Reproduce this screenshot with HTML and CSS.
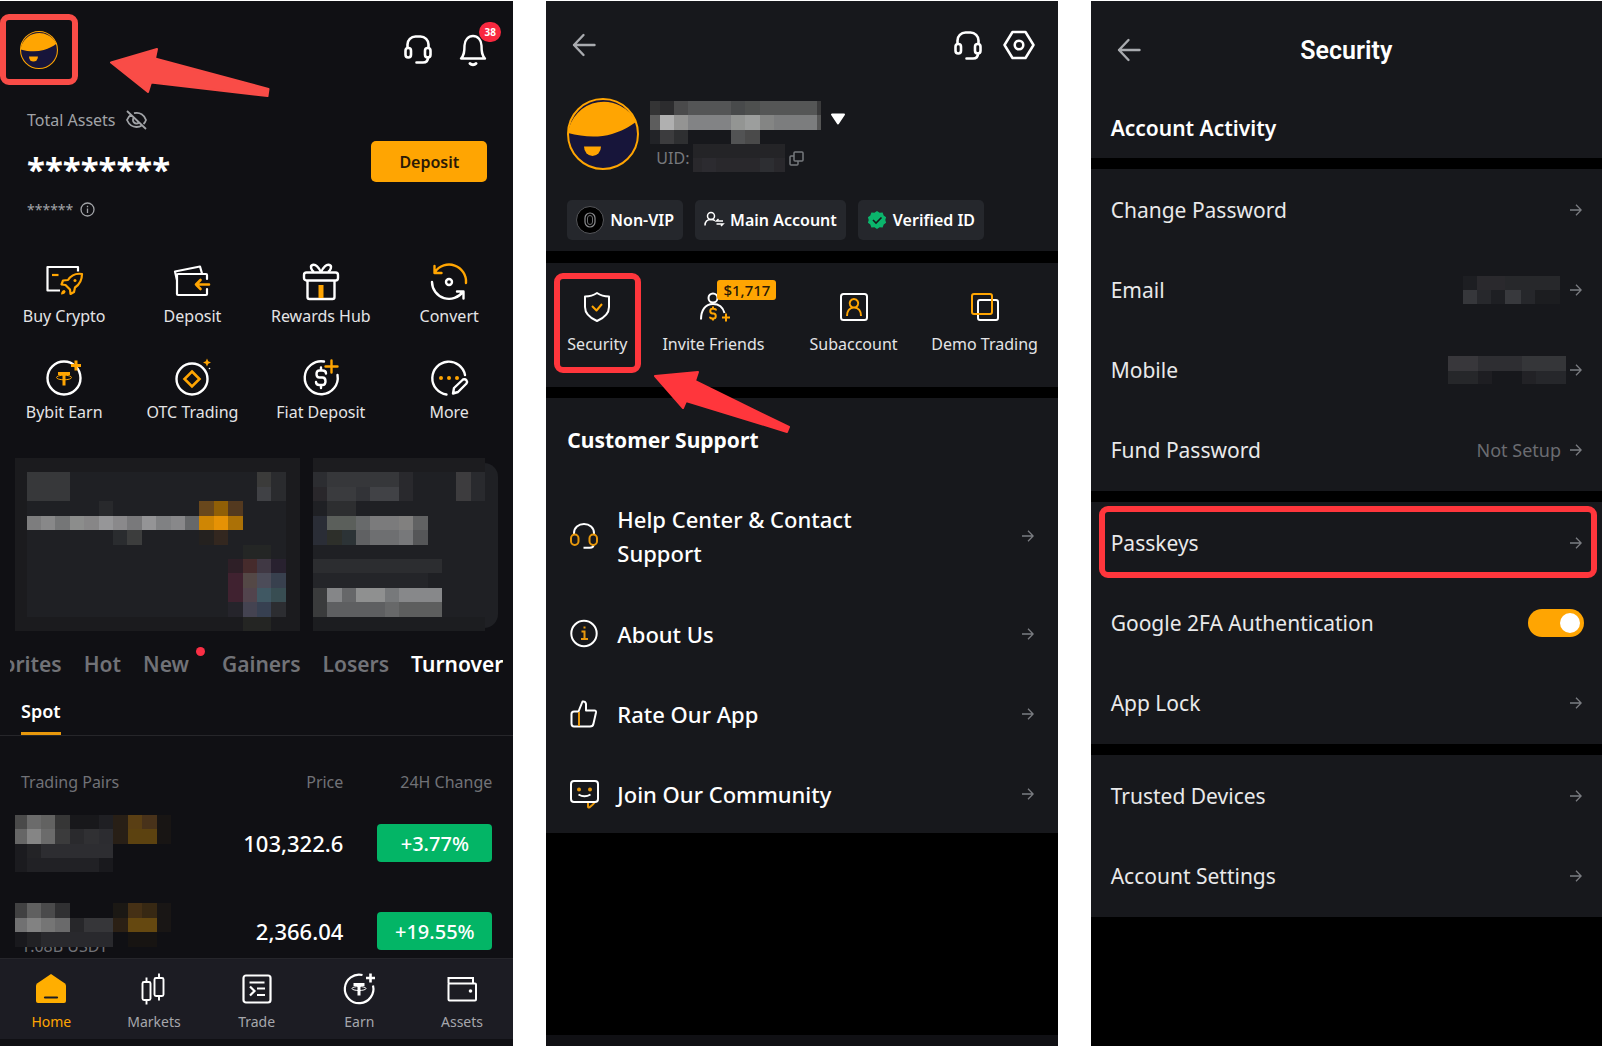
FILE: index.html
```html
<!DOCTYPE html>
<html lang="en">
<head>
    <meta charset="UTF-8">
    <meta name="viewport" content="width=device-width, initial-scale=1.0">
    <title>Set up a passkey</title>
    <link rel="stylesheet" href="styles.css">
</head>
<body>
    <!-- Shared icons -->
    <svg class="sprite" aria-hidden="true">
        <symbol id="avatar" viewBox="0 0 72 72">
            <circle cx="36" cy="36" r="35" fill="#17153a" stroke="#ffa502" stroke-width="2"/>
            <path d="M1 35C16 39 31 40 45 36C55 33 62 29 69 24A36 36 0 0 0 1 35z" fill="#ffa502"/>
            <path d="M17 48.500h17a8.500 9.500 0 0 1-17 0z" fill="#ffa502"/>
        </symbol>
        <symbol id="headset" viewBox="0 0 28 29">
            <g fill="none" stroke="#fff" stroke-width="2.600" stroke-linecap="round">
                <path d="M3.500 12.500V9.500a8 8 0 0 1 8-8h5a8 8 0 0 1 8 8V12.500"/>
                <rect x="1.500" y="13" width="5.500" height="9.500" rx="2.700"/>
                <rect x="21" y="13" width="5.500" height="9.500" rx="2.700"/>
                <path d="M24 22.500c0 3.500-2 5-5 5h-6.500"/>
            </g>
        </symbol>
        <symbol id="back" viewBox="0 0 24 24">
            <path d="M11.500 2L2 12l9.500 10M2 12h20.500" fill="none" stroke="#a9abaf" stroke-width="2.400" stroke-linecap="round" stroke-linejoin="round"/>
        </symbol>
        <symbol id="go" viewBox="0 0 12 12">
            <path d="M0 6h11M6 .8L11.200 6L6 11.200" fill="none" stroke="#7b7d82" stroke-width="1.300"/>
        </symbol>
    </svg>

    <div class="screens">
        <!-- Home screen -->
        <section class="screen home">
            <header class="home-header">
                <a href="#profile" class="profile-link" aria-label="Profile"><svg class="avatar-small"><use href="#avatar"/></svg></a>
                <div class="header-icons">
                    <a href="#support" aria-label="Support"><svg class="headset"><use href="#headset"/></svg></a>
                    <a href="#notifications" class="bell" aria-label="Notifications">
                        <svg width="28" height="32" viewBox="0 0 28 32" fill="none" stroke="#fff" stroke-width="2.400" stroke-linecap="round" stroke-linejoin="round">
                            <path d="M2 24.500h24c-3-3-3.500-6-3.500-13a8.500 9.500 0 0 0-17 0c0 7-.5 10-3.500 13z"/>
                            <path d="M11 29.500c1.500 1.500 4.500 1.500 6 0" stroke-width="3"/>
                        </svg>
                        <span class="count">38</span>
                    </a>
                </div>
            </header>
            <svg class="pointer pointer-home" width="162" height="52" viewBox="0 0 162 52" fill="#f94c47" stroke="#f94c47" stroke-width="2" stroke-linejoin="round">
                <path d="M2 15.500L48 2L46 11.500L159.500 42L158.500 49L42 35.500L39 45z"/>
            </svg>

            <div class="assets">
                <div class="assets-label">
                    <span>Total Assets</span>
                    <svg width="21" height="20" viewBox="0 0 21 20" fill="none" stroke="#a1a3a7" stroke-width="1.800">
                        <path d="M1 1l19 18M5.500 4.500C3 6 1.500 8 1 10c2 4.500 5.500 7 9.500 7 2 0 4-.6 5.500-1.500M8 3.200c6-1.500 10.500 2 12 6.800-.5 1.500-1.500 3-2.500 4"/>
                        <path d="M8 7.500a3.500 3.500 0 0 0 5 5"/>
                    </svg>
                </div>
                <div class="assets-main">
                    <span class="balance">********</span>
                    <button type="button" class="deposit">Deposit</button>
                </div>
                <div class="assets-sub">
                    <span>******</span>
                    <svg width="15" height="15" viewBox="0 0 15 15" fill="none" stroke="#a1a3a7" stroke-width="1.300">
                        <circle cx="7.500" cy="7.500" r="6.500"/>
                        <path d="M7.500 6.500v4.500M7.500 3.800v1.400"/>
                    </svg>
                </div>
            </div>

            <nav class="shortcuts">
                <a href="#buy">
                    <svg width="38" height="36" viewBox="0 0 38 36" fill="none" stroke-width="2.200" stroke-linejoin="round">
                        <path d="M33 8.500V4H2.500v23.500H15" stroke="#fff"/>
                        <path d="M7 12h6.500" stroke="#ffa502"/>
                        <path d="M37 11c-6-1-11 1.500-14 6l-5 .5-1.500 4 4 .5 4.500 4.500.5 4.500 3.500-2 1-4.500c4.500-3 7-7.500 7-13.500z" stroke="#ffa502"/>
                        <circle cx="30" cy="17.500" r="1.500" fill="#ffa502"/>
                        <path d="M19.500 27c-2 0-3.500 2-3.500 4.500 2.500 0 4.500-1 4.500-3z" fill="#ffa502"/>
                    </svg>
                    <span>Buy Crypto</span>
                </a>
                <a href="#deposit">
                    <svg width="38" height="36" viewBox="0 0 38 36" fill="none" stroke-width="2.200" stroke-linejoin="round" stroke-linecap="round">
                        <path d="M34 16V12q0-1-1-1H5q-1 0-1 1v19q0 1 1 1h28q1 0 1-1v-5" stroke="#fff"/>
                        <path d="M4 17L2 8.500L27 3.500l2 7" stroke="#fff"/>
                        <path d="M36 21.500H23M27.500 17l-4.500 4.500 4.500 4.500" stroke="#ffa502" stroke-width="2.600"/>
                    </svg>
                    <span>Deposit</span>
                </a>
                <a href="#rewards">
                    <svg width="38" height="38" viewBox="0 0 38 38" fill="none" stroke="#fff" stroke-width="2.400" stroke-linejoin="round">
                        <rect x="2" y="9.500" width="34" height="8" rx="2.500"/>
                        <path d="M5.500 17.500V34q0 2 2 2h23q2 0 2-2V17.500"/>
                        <path d="M19 9.500C17 4 13.500 1 10.500 2S9.500 7.500 12 9M19 9.500C21 4 24.500 1 27.500 2S28.500 7.500 26 9"/>
                        <path d="M19 22v13" stroke="#ffa502" stroke-width="5"/>
                    </svg>
                    <span>Rewards Hub</span>
                </a>
                <a href="#convert">
                    <svg width="38" height="38" viewBox="0 0 38 38" fill="none" stroke-width="2.400" stroke-linecap="round" stroke-linejoin="round">
                        <path d="M36 20A17 17 0 0 0 5 9M4.500 3v7h7" stroke="#ffa502"/>
                        <path d="M2 19a17 17 0 0 0 31 9.500M27 28.500h6.500v7" stroke="#fff"/>
                        <circle cx="19" cy="19" r="3" stroke="#fff"/>
                    </svg>
                    <span>Convert</span>
                </a>
                <a href="#earn">
                    <svg width="38" height="38" viewBox="0 0 38 38" fill="none">
                        <circle cx="19" cy="19" r="16.500" stroke="#fff" stroke-width="2.400"/>
                        <path d="M13 14.500h12M19 14.500v12M31 1.500v10M26 6.500h10" stroke="#ffa502" stroke-width="3"/>
                        <ellipse cx="19" cy="18.500" rx="7.500" ry="2.300" stroke="#ffa502"/>
                    </svg>
                    <span>Bybit Earn</span>
                </a>
                <a href="#otc">
                    <svg width="38" height="38" viewBox="0 0 38 38" fill="none">
                        <circle cx="19" cy="20" r="15.500" stroke="#fff" stroke-width="2.400"/>
                        <path d="M19 12.500l7.500 7.500-7.500 7.500-7.500-7.500z" stroke="#ffa502" stroke-width="2.600"/>
                        <path d="M34-.5l1.200 2.800L38 3.500l-2.800 1.200L34 7.500l-1.200-2.800L30 3.500l2.800-1.200z" fill="#ffa502"/>
                        <circle cx="36.500" cy="9.500" r=".8" fill="#fff"/>
                    </svg>
                    <span>OTC Trading</span>
                </a>
                <a href="#fiat">
                    <svg width="38" height="38" viewBox="0 0 38 38" fill="none" stroke="#fff" stroke-width="2.400" stroke-linecap="round">
                        <path d="M22 2.500A16.500 16.500 0 1 0 35.500 16"/>
                        <path d="M24 14.500c0-2-1.500-3-3.500-3h-3c-4 0-4 7 0 7h3c4 0 4 7.500 0 7.500h-3c-2 0-3.500-1-3.500-3M19 8.500v3M19 26v3"/>
                        <path d="M29.500 1.500v12M23.500 7.500h12" stroke="#ffa502"/>
                    </svg>
                    <span>Fiat Deposit</span>
                </a>
                <a href="#more">
                    <svg width="38" height="38" viewBox="0 0 38 38" fill="none" stroke="#fff" stroke-width="2.400" stroke-linecap="round" stroke-linejoin="round">
                        <path d="M16.500 35.500A16.500 16.500 0 1 1 35 16"/>
                        <path d="M23 34.500l1-5.500 9-8.500c3-1 5 1.500 3.500 4l-8.500 8.500z"/>
                        <g fill="#ffa502" stroke="none"><circle cx="11" cy="19" r="2"/><circle cx="19" cy="19" r="2"/><circle cx="27" cy="19" r="2"/></g>
                    </svg>
                    <span>More</span>
                </a>
            </nav>

            <div class="promos">
                <svg class="mosaic promo promo-wide" viewBox="0.2 0 19.800 12" preserveAspectRatio="none" shape-rendering="crispEdges">
                    <rect width="20" height="12" fill="#1b1b1e"/>
                    <rect x="1" y="1" width="18" height="10" fill="#1f2024"/>
                    <rect x="1" y="1" width="3" height="2" fill="#37383a"/>
                    <rect x="17" y="1" width="1" height="1" fill="#3b3b3a"/>
                    <rect x="17" y="2" width="1" height="1" fill="#404145"/>
                    <rect x="18" y="1" width="1" height="2" fill="#2a2b2e"/>
                    <rect x="6" y="3" width="1" height="1" fill="#28292c"/>
                    <rect x="13" y="3" width="1" height="1" fill="#68471c"/>
                    <rect x="14" y="3" width="1" height="1" fill="#905f06"/>
                    <rect x="15" y="3" width="1" height="1" fill="#53391f"/>
                    <rect x="1" y="4" width="1" height="1" fill="#7d7d7e"/>
                    <rect x="2" y="4" width="1" height="1" fill="#888889"/>
                    <rect x="3" y="4" width="1" height="1" fill="#757677"/>
                    <rect x="4" y="4" width="1" height="1" fill="#8c8d8c"/>
                    <rect x="5" y="4" width="1" height="1" fill="#878687"/>
                    <rect x="6" y="4" width="1" height="1" fill="#969698"/>
                    <rect x="7" y="4" width="1" height="1" fill="#8a898b"/>
                    <rect x="8" y="4" width="1" height="1" fill="#79797b"/>
                    <rect x="9" y="4" width="1" height="1" fill="#949496"/>
                    <rect x="10" y="4" width="1" height="1" fill="#808183"/>
                    <rect x="11" y="4" width="1" height="1" fill="#88888a"/>
                    <rect x="12" y="4" width="1" height="1" fill="#66686a"/>
                    <rect x="13" y="4" width="1" height="1" fill="#cf8604"/>
                    <rect x="14" y="4" width="1" height="1" fill="#e69205"/>
                    <rect x="15" y="4" width="1" height="1" fill="#ac7106"/>
                    <rect x="7" y="5" width="1" height="1" fill="#2a2c2f"/>
                    <rect x="8" y="5" width="1" height="1" fill="#3c3d3d"/>
                    <rect x="13" y="5" width="1" height="1" fill="#24211f"/>
                    <rect x="14" y="5" width="1" height="1" fill="#33271f"/>
                    <rect x="16" y="6" width="2" height="1" fill="#242625"/>
                    <rect x="15" y="7" width="1" height="1" fill="#2e1f27"/>
                    <rect x="16" y="7" width="1" height="1" fill="#462b2c"/>
                    <rect x="17" y="7" width="1" height="1" fill="#403844"/>
                    <rect x="18" y="7" width="1" height="1" fill="#28212f"/>
                    <rect x="15" y="8" width="1" height="2" fill="#402230"/>
                    <rect x="16" y="8" width="1" height="1" fill="#544846"/>
                    <rect x="17" y="8" width="1" height="1" fill="#4c4c59"/>
                    <rect x="18" y="8" width="1" height="1" fill="#38404e"/>
                    <rect x="16" y="9" width="1" height="1" fill="#52444d"/>
                    <rect x="17" y="9" width="1" height="1" fill="#405863"/>
                    <rect x="18" y="9" width="1" height="1" fill="#384d52"/>
                    <rect x="15" y="10" width="1" height="1" fill="#25242b"/>
                    <rect x="16" y="10" width="1" height="1" fill="#444351"/>
                    <rect x="17" y="10" width="1" height="1" fill="#374051"/>
                    <rect x="18" y="10" width="1" height="1" fill="#2c2d31"/>
                    <rect x="16" y="11" width="2" height="1" fill="#242523"/>
                </svg>
                <div class="promo promo-narrow">
                    <svg class="mosaic" viewBox="0 0 12 12" preserveAspectRatio="none" shape-rendering="crispEdges">
                        <rect width="12" height="12" fill="#1f2024"/>
                        <rect width="12" height="1" fill="#1c1c1f"/>
                        <rect y="11" width="12" height="1" fill="#1c1d20"/>
                        <rect y="1" width="1" height="1" fill="#2c2d31"/>
                        <rect y="2" width="1" height="1" fill="#29272b"/>
                        <rect x="1" y="1" width="5" height="1" fill="#36373a"/>
                        <rect x="1" y="2" width="2" height="1" fill="#3a3b3e"/>
                        <rect x="3" y="2" width="1" height="1" fill="#323337"/>
                        <rect x="4" y="2" width="2" height="1" fill="#414246"/>
                        <rect x="6" y="1" width="1" height="2" fill="#29292d"/>
                        <rect x="10" y="1" width="1" height="2" fill="#3d3c3e"/>
                        <rect x="11" y="1" width="1" height="2" fill="#292a2e"/>
                        <rect x="1" y="3" width="2" height="1" fill="#2d2e30"/>
                        <rect y="4" width="1" height="2" fill="#2a2d36"/>
                        <rect x="1" y="4" width="2" height="1" fill="#5b5f5b"/>
                        <rect x="3" y="4" width="1" height="1" fill="#686a6b"/>
                        <rect x="4" y="4" width="2" height="1" fill="#7b7b7c"/>
                        <rect x="6" y="4" width="1" height="1" fill="#81807f"/>
                        <rect x="7" y="4" width="1" height="1" fill="#616263"/>
                        <rect x="1" y="5" width="1" height="1" fill="#2d2f2a"/>
                        <rect x="2" y="5" width="1" height="1" fill="#2c3336"/>
                        <rect x="3" y="5" width="1" height="1" fill="#606163"/>
                        <rect x="4" y="5" width="2" height="1" fill="#6e6f71"/>
                        <rect x="6" y="5" width="1" height="1" fill="#77787a"/>
                        <rect x="7" y="5" width="1" height="1" fill="#555658"/>
                        <rect y="7" width="9" height="1" fill="#2c2d30"/>
                        <rect y="8" width="8" height="1" fill="#242529"/>
                        <rect y="9" width="1" height="2" fill="#3a3b3c"/>
                        <rect x="1" y="9" width="1" height="1" fill="#858688"/>
                        <rect x="2" y="9" width="1" height="1" fill="#666769"/>
                        <rect x="3" y="9" width="2" height="1" fill="#8f9090"/>
                        <rect x="5" y="9" width="1" height="1" fill="#77797b"/>
                        <rect x="6" y="9" width="3" height="1" fill="#87888a"/>
                        <rect x="1" y="10" width="4" height="1" fill="#5e5f61"/>
                        <rect x="5" y="10" width="1" height="1" fill="#676869"/>
                        <rect x="6" y="10" width="3" height="1" fill="#5d5e5e"/>
                    </svg>
                </div>
            </div>

            <nav class="tabs">
                <a href="#favorites">Favorites</a>
                <a href="#hot">Hot</a>
                <a href="#new" class="has-dot">New</a>
                <a href="#gainers">Gainers</a>
                <a href="#losers">Losers</a>
                <a href="#turnover" class="active">Turnover</a>
            </nav>
            <div class="subtabs">
                <a href="#spot">Spot</a>
            </div>

            <div class="market">
                <table>
                    <thead>
                        <tr><th>Trading Pairs</th><th>Price</th><th>24H Change</th></tr>
                    </thead>
                    <tbody>
                        <tr>
                            <td class="pair">
                                <svg class="mosaic pair-cover" width="156" height="57" viewBox="0.2 0 10.800 4" preserveAspectRatio="none" shape-rendering="crispEdges">
                                    <rect width="1" height="1" fill="#4a4a4a"/>
                                    <rect x="1" width="1" height="1" fill="#6b6b6b"/>
                                    <rect x="2" width="1" height="1" fill="#626261"/>
                                    <rect x="3" width="1" height="1" fill="#363636"/>
                                    <rect x="4" width="2" height="1" fill="#18181b"/>
                                    <rect x="6" width="1" height="1" fill="#1f1f23"/>
                                    <rect x="7" width="1" height="2" fill="#281f16"/>
                                    <rect x="8" width="1" height="1" fill="#5a3f14"/>
                                    <rect x="9" width="1" height="1" fill="#48321a"/>
                                    <rect x="10" width="1" height="2" fill="#181514"/>
                                    <rect y="1" width="1" height="1" fill="#666"/>
                                    <rect x="1" y="1" width="1" height="1" fill="#858585"/>
                                    <rect x="2" y="1" width="1" height="1" fill="#6b6b6b"/>
                                    <rect x="3" y="1" width="1" height="1" fill="#3b3b3c"/>
                                    <rect x="4" y="1" width="1" height="1" fill="#2a2a2d"/>
                                    <rect x="5" y="1" width="1" height="1" fill="#303033"/>
                                    <rect x="6" y="1" width="1" height="1" fill="#2c2c30"/>
                                    <rect x="8" y="1" width="2" height="1" fill="#5c4210"/>
                                    <rect y="2" width="1" height="2" fill="#1b1b1f"/>
                                    <rect x="1" y="2" width="1" height="1" fill="#232326"/>
                                    <rect x="2" y="2" width="5" height="1" fill="#2d2d31"/>
                                    <rect x="1" y="3" width="5" height="1" fill="#212125"/>
                                    <rect x="6" y="3" width="1" height="1" fill="#19191d"/>
                                </svg>
                            </td>
                            <td class="price">103,322.6</td>
                            <td><button type="button" class="change">+3.77%</button></td>
                        </tr>
                        <tr>
                            <td class="pair">
                                <span class="volume">1.08B USDT</span>
                                <svg class="mosaic pair-cover" width="156" height="44" viewBox="0.2 0 10.800 3" preserveAspectRatio="none" shape-rendering="crispEdges">
                                    <rect width="11" height="3" fill="#101014"/>
                                    <rect width="1" height="1" fill="#414142"/>
                                    <rect x="1" width="1" height="1" fill="#606060"/>
                                    <rect x="2" width="1" height="1" fill="#4a4a4b"/>
                                    <rect x="3" width="1" height="1" fill="#303032"/>
                                    <rect x="7" width="1" height="1" fill="#1b1814"/>
                                    <rect x="8" width="1" height="1" fill="#453015"/>
                                    <rect x="9" width="1" height="1" fill="#372813"/>
                                    <rect x="10" width="1" height="2" fill="#191615"/>
                                    <rect y="1" width="1" height="1" fill="#717172"/>
                                    <rect x="1" y="1" width="1" height="1" fill="#828282"/>
                                    <rect x="2" y="1" width="1" height="1" fill="#757575"/>
                                    <rect x="3" y="1" width="1" height="1" fill="#6a6a6b"/>
                                    <rect x="4" y="1" width="1" height="1" fill="#27272a"/>
                                    <rect x="5" y="1" width="2" height="1" fill="#363639"/>
                                    <rect x="7" y="1" width="1" height="1" fill="#2b2015"/>
                                    <rect x="8" y="1" width="2" height="1" fill="#654810"/>
                                    <rect y="2" width="1" height="1" fill="#19191d"/>
                                    <rect x="1" y="2" width="1" height="1" fill="#212124"/>
                                    <rect x="2" y="2" width="5" height="1" fill="#29292d"/>
                                    <rect x="8" y="2" width="2" height="1" fill="#171412"/>
                                </svg>
                            </td>
                            <td class="price">2,366.04</td>
                            <td><button type="button" class="change">+19.55%</button></td>
                        </tr>
                    </tbody>
                </table>
            </div>

            <nav class="bottom-nav">
                <a href="#home" class="active">
                    <svg width="32" height="32" viewBox="0 0 32 32">
                        <path d="M16 1L30 10.500q1 1 1 2.500V28q0 2-2 2H3q-2 0-2-2V13Q1 11.500 2 10.500z" fill="#ffae00"/>
                        <path d="M10 24.500h12" stroke="#1c1c23" stroke-width="2.200" stroke-linecap="round"/>
                    </svg>
                    <span>Home</span>
                </a>
                <a href="#markets">
                    <svg width="32" height="32" viewBox="0 0 32 32" fill="none" stroke="#fff" stroke-width="1.900">
                        <rect x="4.500" y="9" width="8" height="18" rx="1.500"/><rect x="16.500" y="5" width="9" height="18" rx="1.500"/>
                        <path d="M8.500 4.500V9M8.500 27v4.500M21 .5V5M21 23v4.500"/>
                    </svg>
                    <span>Markets</span>
                </a>
                <a href="#trade">
                    <svg width="32" height="32" viewBox="0 0 32 32" fill="none" stroke="#fff" stroke-width="2.200">
                        <rect x="2.500" y="2.500" width="27" height="27" rx="2.500"/>
                        <path d="M8.500 9.500h15M9 13.500l4.500 4.500L9 22.500M16 15.500h8M16 22h8"/>
                    </svg>
                    <span>Trade</span>
                </a>
                <a href="#earn">
                    <svg width="32" height="32" viewBox="0 0 32 32" fill="none" stroke="#fff" stroke-width="2.200">
                        <path d="M19.500 2A14.300 14.300 0 1 0 30 12.500"/>
                        <path d="M27.500.5v9M23 5h9" stroke-width="2.600"/>
                        <path d="M10.500 11.500h11M16 11.500v11" stroke-width="3"/>
                        <ellipse cx="16" cy="15.500" rx="7" ry="2" stroke-width="1"/>
                    </svg>
                    <span>Earn</span>
                </a>
                <a href="#assets">
                    <svg width="32" height="32" viewBox="0 0 32 32" fill="none" stroke="#fff" stroke-width="2">
                        <path d="M2.500 10.500V5h24.500V10.500"/>
                        <rect x="2.500" y="10.500" width="27.500" height="17" rx="1"/>
                        <circle cx="24.500" cy="18" r="1.800" fill="#fff" stroke="none"/>
                    </svg>
                    <span>Assets</span>
                </a>
            </nav>
        </section>

        <!-- Profile screen -->
        <section class="screen profile">
            <div class="panel profile-top">
                <header class="profile-header">
                    <a href="#home" aria-label="Back"><svg class="back"><use href="#back"/></svg></a>
                    <div class="header-icons">
                        <a href="#support" aria-label="Support"><svg class="headset"><use href="#headset"/></svg></a>
                        <a href="#settings" aria-label="Settings">
                            <svg width="32" height="30" viewBox="0 0 32 30" fill="none" stroke="#fff" stroke-width="2.500" stroke-linejoin="round">
                                <path d="M9.500 2h13L30.500 15l-8 13h-13L1.500 15z"/>
                                <circle cx="16" cy="15" r="4.300"/>
                            </svg>
                        </a>
                    </div>
                </header>
                <div class="user">
                    <svg class="avatar-large"><use href="#avatar"/></svg>
                    <div class="user-info">
                        <div class="user-name">
                            <svg class="mosaic" width="171" height="43" viewBox="0.300 0 12 3" preserveAspectRatio="none" shape-rendering="crispEdges">
                                <rect width="1" height="1" fill="#343435"/>
                                <rect x="1" width="1" height="1" fill="#2c2c2e"/>
                                <rect x="2" width="1" height="1" fill="#4a4a4b"/>
                                <rect x="3" width="3" height="1" fill="#545556"/>
                                <rect x="6" width="1" height="1" fill="#484a4b"/>
                                <rect x="7" width="1" height="1" fill="#4e504f"/>
                                <rect x="8" width="4" height="1" fill="#555656"/>
                                <rect x="12" width="1" height="1" fill="#3a3a3b"/>
                                <rect y="1" width="1" height="1" fill="#5d5d5d"/>
                                <rect x="1" y="1" width="1" height="1" fill="#b0b0b0"/>
                                <rect x="2" y="1" width="1" height="1" fill="#949493"/>
                                <rect x="3" y="1" width="3" height="1" fill="#828385"/>
                                <rect x="6" y="1" width="1" height="1" fill="#939593"/>
                                <rect x="7" y="1" width="1" height="1" fill="#9c9e9d"/>
                                <rect x="8" y="1" width="1" height="1" fill="#848584"/>
                                <rect x="9" y="1" width="3" height="1" fill="#7c7d7e"/>
                                <rect x="12" y="1" width="1" height="1" fill="#555"/>
                                <rect y="2" width="1" height="1" fill="#222327"/>
                                <rect x="1" y="2" width="1" height="1" fill="#3c3c3e"/>
                                <rect x="2" y="2" width="1" height="1" fill="#2e2f31"/>
                                <rect x="6" y="2" width="1" height="1" fill="#525354"/>
                                <rect x="7" y="2" width="1" height="1" fill="#4a4a4a"/>
                            </svg>
                            <svg width="16" height="12" viewBox="0 0 16 12"><path d="M2 1.500h12L8 10.500z" fill="#fff" stroke="#fff" stroke-width="2" stroke-linejoin="round"/></svg>
                        </div>
                        <div class="uid">
                            <span>UID:</span>
                            <svg width="92" height="28" viewBox="0 0 92 28" shape-rendering="crispEdges">
                                <rect width="92" height="14" fill="#242427"/>
                                <rect y="14" width="92" height="14" fill="#29282c"/>
                                <rect x="9" y="14" width="14" height="14" fill="#2c2b30"/>
                                <rect x="67" y="14" width="14" height="14" fill="#2d2e32"/>
                            </svg>
                            <svg width="15" height="15" viewBox="0 0 15 15" fill="none" stroke="#77797d" stroke-width="1.500">
                                <rect x="5" y="1" width="9" height="9" rx="1"/>
                                <path d="M5 5H2q-1 0-1 1v7q0 1 1 1h6q1 0 1-1v-3"/>
                            </svg>
                        </div>
                    </div>
                </div>
                <div class="chips">
                    <button type="button">
                        <svg width="28" height="28" viewBox="0 0 28 28" fill="none">
                            <circle cx="14" cy="14" r="13.500" fill="#000" stroke="#55565a"/>
                            <rect x="9" y="7" width="10" height="14" rx="5" stroke="#8d8e91" stroke-width="1.200"/>
                            <rect x="11.500" y="9.500" width="5" height="9" rx="2.500" stroke="#6d6e71"/>
                        </svg>
                        Non-VIP
                    </button>
                    <button type="button">
                        <svg width="20" height="20" viewBox="0 0 20 20" fill="none" stroke="#fff" stroke-width="1.500">
                            <circle cx="7" cy="6" r="3.500"/>
                            <path d="M1 15.500c0-4 2.500-6 6-6 1.500 0 3 .4 4 1.300M19 11h-6.500l2-2M12.500 14H19l-2 2"/>
                        </svg>
                        Main Account
                    </button>
                    <button type="button">
                        <svg width="20" height="20" viewBox="0 0 20 20">
                            <path d="M10 1l2.600 1.700 3-.1 1.100 2.800 2.400 1.900L18.300 10l.8 2.800-2.400 1.800-1.100 2.800-3-.1L10 19l-2.600-1.700-3 .1-1.100-2.800L.9 12.800 1.700 10 .9 7.300l2.400-1.900 1.100-2.800 3 .1z" fill="#0bb56c"/>
                            <path d="M6 10l3 3 5.500-5.500" fill="none" stroke="#17181c" stroke-width="1.600"/>
                        </svg>
                        Verified ID
                    </button>
                </div>
            </div>

            <nav class="panel features">
                <a href="#security" class="marked">
                    <svg width="32" height="32" viewBox="0 0 32 32" fill="none" stroke-width="2" stroke-linejoin="round">
                        <path d="M16 2q5 3.500 12 3.500V16c0 7-5 11-12 14C9 27 4 23 4 16V5.500Q11 5.500 16 2z" stroke="#fff"/>
                        <path d="M11 15l4.500 4.500L21 13" stroke="#ffa502"/>
                    </svg>
                    <span>Security</span>
                </a>
                <a href="#invite">
                    <svg width="32" height="32" viewBox="0 0 32 32" fill="none" stroke-width="2">
                        <circle cx="16" cy="7" r="4.500" stroke="#fff"/>
                        <path d="M4 28.500c0-9 4-15.500 12-15.500 6 0 10 3.500 11.500 9" stroke="#fff"/>
                        <path d="M19 19.500c0-1.200-1-1.800-2.500-1.800h-1c-3 0-3 4.800 0 4.800h1c3 0 3 5 0 5h-1c-1.500 0-2.500-.6-2.500-1.800M16 15.500v2M16 27.500v2M29 22.500v8M25 26.500h8" stroke="#ffa502"/>
                    </svg>
                    <span class="bonus">$1,717</span>
                    <span>Invite Friends</span>
                </a>
                <a href="#subaccount">
                    <svg width="32" height="32" viewBox="0 0 32 32" fill="none" stroke-width="2">
                        <rect x="3" y="3" width="26" height="26" rx="2.500" stroke="#fff"/>
                        <path d="M16 8a4.300 4.300 0 1 1-.1 0zM9 25c0-5 2.500-8.500 7-8.500s7 3.500 7 8.500" stroke="#ffa502"/>
                    </svg>
                    <span>Subaccount</span>
                </a>
                <a href="#demo">
                    <svg width="32" height="32" viewBox="0 0 32 32" fill="none" stroke-width="2">
                        <rect x="9" y="9" width="20" height="20" rx="2" stroke="#fff"/>
                        <rect x="3" y="3" width="20" height="20" rx="2" stroke="#ffa502"/>
                    </svg>
                    <span>Demo Trading</span>
                </a>
            </nav>
            <svg class="pointer pointer-profile" width="138" height="64" viewBox="0 0 138 64" fill="#ff363c" stroke="#ff363c" stroke-width="2" stroke-linejoin="round">
                <path d="M2 6L45 2L42 11L136 57L134 62L33 31L30 38z"/>
            </svg>

            <div class="panel support">
                <h2>Customer Support</h2>
                <a href="#help" class="support-row">
                    <svg width="30" height="30" viewBox="0 0 30 30" fill="none" stroke-width="2">
                        <path d="M5 14V12C5 6.500 9.500 3 15 3s10 3.500 10 9v2M24.500 24c0 2-1.500 2.700-3.500 2.700h-6.500" stroke="#fff"/>
                        <rect x="2" y="13.500" width="7.500" height="10.500" rx="3.700" stroke="#e8980c"/>
                        <rect x="20.500" y="13.500" width="7.500" height="10.500" rx="3.700" stroke="#e8980c"/>
                    </svg>
                    <span>Help Center &amp; Contact Support</span>
                    <svg class="go"><use href="#go"/></svg>
                </a>
                <a href="#about" class="support-row">
                    <svg width="30" height="30" viewBox="0 0 30 30" fill="none" stroke-width="2">
                        <circle cx="15" cy="14.500" r="12.700" stroke="#fff"/>
                        <path d="M12.500 12.500H15.500v7.500M12 20h7M14.500 8.500h2" stroke="#e8980c"/>
                    </svg>
                    <span>About Us</span>
                    <svg class="go"><use href="#go"/></svg>
                </a>
                <a href="#rate" class="support-row">
                    <svg width="30" height="30" viewBox="0 0 30 30" fill="none" stroke="#fff" stroke-width="2" stroke-linejoin="round">
                        <path d="M9.500 12.500H5q-2.500 0-2.500 2.500v9.500Q2.500 27.500 5 27.500h16q3 0 3.500-3l2.500-11q.3-2-1.500-2h-8.500V5q-.5-3-3.500-2.500z"/>
                        <path d="M10 13v14" stroke="#e8980c"/>
                    </svg>
                    <span>Rate Our App</span>
                    <svg class="go"><use href="#go"/></svg>
                </a>
                <a href="#community" class="support-row">
                    <svg width="30" height="30" viewBox="0 0 30 30" fill="none" stroke-width="2" stroke-linejoin="round">
                        <path d="M19 23.500v4q0 1.500 1.500.8Q24 26 26 23" stroke="#e8980c"/>
                        <rect x="2" y="2" width="27" height="21" rx="3" stroke="#fff"/>
                        <path d="M9.500 15.500q6 3.500 12 0" stroke="#fff"/>
                        <circle cx="10" cy="10.500" r="2" fill="#e8980c"/><circle cx="21" cy="10.500" r="2" fill="#e8980c"/>
                    </svg>
                    <span>Join Our Community</span>
                    <svg class="go"><use href="#go"/></svg>
                </a>
            </div>
        </section>

        <!-- Security screen -->
        <section class="screen security">
            <div class="panel security-top">
                <header class="security-header">
                    <a href="#profile" aria-label="Back"><svg class="back"><use href="#back"/></svg></a>
                    <h1>Security</h1>
                </header>
                <h2>Account Activity</h2>
            </div>
            <div class="panel settings">
                <a href="#password" class="setting"><span>Change Password</span><svg class="go"><use href="#go"/></svg></a>
                <a href="#email" class="setting">
                    <span>Email</span>
                    <svg class="hidden-value with-gap" width="97" height="28" viewBox="0 0 97 28" shape-rendering="crispEdges">
                        <rect width="14" height="14" fill="#1d1e22"/>
                        <rect x="14" width="28" height="14" fill="#2a292d"/>
                        <rect x="42" width="55" height="14" fill="#27282b"/>
                        <rect y="14" width="14" height="14" fill="#36373b"/>
                        <rect x="14" y="14" width="14" height="14" fill="#27282c"/>
                        <rect x="28" y="14" width="14" height="14" fill="#1e1f23"/>
                        <rect x="42" y="14" width="16" height="14" fill="#38393d"/>
                        <rect x="58" y="14" width="14" height="14" fill="#26272b"/>
                        <rect x="72" y="14" width="25" height="14" fill="#1c1d20"/>
                    </svg>
                    <svg class="go"><use href="#go"/></svg>
                </a>
                <a href="#mobile" class="setting">
                    <span>Mobile</span>
                    <svg class="hidden-value" width="118" height="28" viewBox="0 0 118 28" shape-rendering="crispEdges">
                        <rect width="30" height="15" fill="#38373b"/>
                        <rect x="30" width="44" height="15" fill="#2e2e32"/>
                        <rect x="74" width="44" height="15" fill="#353639"/>
                        <rect y="15" width="30" height="13" fill="#26272a"/>
                        <rect x="30" y="15" width="14" height="13" fill="#1e1e22"/>
                        <rect x="74" y="15" width="14" height="13" fill="#222226"/>
                        <rect x="88" y="15" width="30" height="13" fill="#26272b"/>
                    </svg>
                    <svg class="go"><use href="#go"/></svg>
                </a>
                <a href="#fund-password" class="setting"><span>Fund Password</span><span class="value">Not Setup</span><svg class="go"><use href="#go"/></svg></a>
            </div>
            <div class="panel settings">
                <a href="#passkeys" class="setting marked-row"><span>Passkeys</span><svg class="go"><use href="#go"/></svg></a>
                <div class="setting">
                    <label for="twofa">Google 2FA Authentication</label>
                    <input type="checkbox" id="twofa" class="switch" checked>
                </div>
                <a href="#app-lock" class="setting"><span>App Lock</span><svg class="go"><use href="#go"/></svg></a>
            </div>
            <div class="panel settings">
                <a href="#devices" class="setting"><span>Trusted Devices</span><svg class="go"><use href="#go"/></svg></a>
                <a href="#account" class="setting"><span>Account Settings</span><svg class="go"><use href="#go"/></svg></a>
            </div>
        </section>
    </div>
</body>
</html>
```
FILE: styles.css
```css
*,
*::before,
*::after {
    box-sizing: border-box;
}

body {
    margin: 0;
    background: #fff;
    color: #fff;
    font-family: "Noto Sans", "Open Sans", sans-serif;
    font-size: 16px;
}

a {
    color: inherit;
    text-decoration: none;
}

svg {
    display: block;
    flex: none;
    overflow: visible;
}

button {
    border: none;
    padding: 0;
    font-family: inherit;
    cursor: pointer;
}

h1, h2 {
    margin: 0;
}

.sprite {
    position: absolute;
    width: 0;
    height: 0;
}

.screens {
    display: grid;
    grid-template-columns: 513fr 511fr 511fr;
    gap: 33px;
    padding-top: 1px;
    min-height: 100vh;
}

.screen {
    position: relative;
    display: flex;
    flex-direction: column;
    min-width: 0;
    background: #000;
}

.panel {
    background: #17181c;
}

.mosaic {
    overflow: hidden;
}

.headset {
    width: 28px;
    height: 29px;
}

.back {
    width: 24px;
    height: 24px;
}

.go {
    width: 12px;
    height: 12px;
}

.header-icons {
    display: flex;
    align-items: center;
    gap: 27px;
}

.pointer {
    position: absolute;
}

/* Home */
.home {
    background: #101014;
    height: calc(100vh - 1px);
    overflow: hidden;
}

.home-header {
    display: flex;
    justify-content: space-between;
    align-items: center;
    padding: 13px 26px 0 0;
}

.profile-link {
    display: flex;
    justify-content: center;
    align-items: center;
    width: 78px;
    height: 71px;
    border: 6px solid #f94c47;
    border-radius: 9px;
}

.avatar-small {
    width: 38px;
    height: 38px;
}

.bell {
    position: relative;
}

.count {
    position: absolute;
    top: -12px;
    right: -14px;
    width: 22px;
    height: 20px;
    border-radius: 10px;
    background: #f9283f;
    font-size: 10px;
    font-weight: 700;
    line-height: 20px;
    text-align: center;
}

.pointer-home {
    left: 109px;
    top: 46px;
}

.assets {
    padding: 23px 26px 0 27px;
    color: #a1a3a7;
}

.assets-label {
    display: flex;
    align-items: center;
    gap: 10px;
    height: 24px;
    font-size: 16px;
}

.assets-main {
    display: flex;
    justify-content: space-between;
    align-items: center;
    margin-top: 9px;
}

.balance {
    height: 32px;
    color: #fff;
    font-size: 33px;
    font-weight: 700;
    line-height: 48px;
}

.deposit {
    width: 116px;
    height: 41px;
    border-radius: 5px;
    background: #ffa502;
    color: #2b1a06;
    font-size: 16px;
    font-weight: 600;
}

.assets-sub {
    display: flex;
    align-items: center;
    gap: 7px;
    height: 24px;
    margin-top: 15px;
    font-size: 14px;
}

.shortcuts {
    display: grid;
    grid-template-columns: repeat(4, 1fr);
    row-gap: 31px;
    margin-top: 42px;
}

.shortcuts a {
    display: flex;
    flex-direction: column;
    align-items: center;
    justify-content: space-between;
    height: 65px;
    color: #e4e4e6;
    font-size: 16px;
    line-height: 24px;
}

.promos {
    display: flex;
    gap: 13px;
    height: 173px;
    margin: 34px 15px 0;
}

.promo-wide {
    flex: 285 1 0;
    min-width: 0;
    height: 173px;
}

.promo-narrow {
    flex: 185 1 0;
    position: relative;
}

.promo-narrow::before {
    content: "";
    position: absolute;
    inset: 5px 0 3px;
    border-radius: 14px;
    background: #1f2024;
}

.promo-narrow svg {
    position: relative;
    width: 93%;
    height: 173px;
}

.tabs {
    display: flex;
    justify-content: flex-end;
    gap: 22px;
    margin: 8px 10px 0;
    padding-top: 10px;
    overflow: hidden;
    color: #717277;
    font-size: 21px;
    font-weight: 600;
    line-height: 30px;
}

.tabs .active {
    color: #fff;
}

.has-dot {
    position: relative;
    padding-right: 11px;
}

.has-dot::after {
    content: "";
    position: absolute;
    top: -2px;
    right: -5px;
    width: 9px;
    height: 9px;
    border-radius: 50%;
    background: #fa2f45;
}

.subtabs {
    display: flex;
    height: 57px;
    padding: 20px 21px 0;
    border-bottom: 1px solid #26262a;
    font-size: 18px;
    font-weight: 600;
    line-height: 24px;
}

.subtabs a {
    border-bottom: 3px solid #e8980c;
}

.market {
    flex: 1;
    min-height: 0;
    padding: 28px 21px 0;
    overflow: hidden;
}

.market table {
    width: 100%;
    border-collapse: collapse;
}

.market th {
    height: 35px;
    padding: 0;
    color: #717277;
    font-size: 16px;
    font-weight: 400;
    text-align: right;
}

.market th:first-child {
    text-align: left;
}

.market th:last-child {
    width: 149px;
}

.market td {
    height: 88px;
    padding: 0;
    text-align: right;
}

.market .pair {
    position: relative;
    text-align: left;
    vertical-align: top;
}

.pair-cover {
    position: absolute;
    top: 16px;
    left: -6px;
}

.volume {
    display: block;
    padding-top: 47px;
    color: #717277;
    font-size: 16px;
    line-height: 24px;
}

.price {
    font-size: 22px;
    font-weight: 500;
}

.change {
    width: 115px;
    height: 38px;
    border-radius: 4px;
    background: #03b566;
    color: #fff;
    font-size: 20px;
    font-weight: 500;
}

.bottom-nav {
    display: grid;
    grid-template-columns: repeat(5, 1fr);
    height: 81px;
    margin-bottom: 7px;
    padding-top: 14px;
    border-top: 1px solid #26262b;
    background: #1c1c23;
}

.bottom-nav a {
    display: flex;
    flex-direction: column;
    align-items: center;
    gap: 7px;
    color: #a6a7ac;
    font-size: 14px;
    line-height: 20px;
}

.bottom-nav .active {
    color: #ffa502;
}

/* Profile */
.profile {
    border-bottom: 11px solid #101014;
}

.profile-top {
    height: 250px;
}

.profile-header {
    display: flex;
    justify-content: space-between;
    align-items: center;
    padding: 29px 23px 0 26px;
}

.profile-header .header-icons {
    gap: 21px;
}

.user {
    display: flex;
    gap: 11px;
    padding: 38px 21px 0;
}

.avatar-large {
    width: 72px;
    height: 72px;
}

.user-info {
    padding-top: 3px;
}

.user-name {
    display: flex;
    align-items: center;
    gap: 9px;
}

.user-name svg:last-child {
    margin-bottom: 8px;
}

.uid {
    display: flex;
    align-items: center;
    gap: 4px;
    padding-left: 6px;
    color: #77797d;
    font-size: 16px;
    line-height: 28px;
}

.chips {
    display: flex;
    gap: 12px;
    padding: 28px 21px 0;
}

.chips button {
    display: flex;
    align-items: center;
    gap: 6px;
    height: 40px;
    padding: 0 9px;
    border-radius: 5px;
    background: #25272c;
    color: #fff;
    font-size: 16px;
    font-weight: 600;
}

.features {
    display: grid;
    grid-template-columns: 102fr 130fr 150fr 112fr;
    height: 124px;
    margin-top: 12px;
    padding: 28px 17px 0 0;
}

.features a {
    position: relative;
    display: flex;
    flex-direction: column;
    align-items: center;
    gap: 9px;
    color: #e4e4e6;
    font-size: 16px;
    line-height: 24px;
    white-space: nowrap;
}

/* Red frames drawn over the item to tap */
.marked::after,
.marked-row::after {
    content: "";
    position: absolute;
    border: 6px solid #ff363c;
    border-radius: 9px;
}

.marked::after {
    top: -18px;
    left: 8px;
    width: 87px;
    height: 100px;
}

.bonus {
    position: absolute;
    top: -11px;
    left: 69px;
    width: 59px;
    height: 20px;
    border-radius: 3px;
    background: #ffa502;
    color: #2b1a06;
    font-size: 15px;
    font-weight: 500;
    line-height: 20px;
    text-align: center;
}

.pointer-profile {
    left: 107px;
    top: 369px;
}

.support {
    height: 435px;
    margin-top: 11px;
    padding: 27px 21px 0;
}

.support h2 {
    font-size: 21px;
    font-weight: 700;
    line-height: 30px;
}

.support-row {
    display: flex;
    align-items: center;
    gap: 18px;
    height: 80px;
    padding: 0 3px 0 2px;
    font-size: 22px;
    font-weight: 500;
    line-height: 34px;
}

.support h2 + .support-row {
    height: 116px;
    margin-top: 23px;
}

.support-row span {
    flex: 1;
    padding-right: 120px;
}

/* Security */
.security-top {
    height: 157px;
}

.security-header {
    position: relative;
    display: flex;
    justify-content: center;
    padding-top: 32px;
}

.security-header a {
    position: absolute;
    left: 26px;
    top: 37px;
}

.security h1 {
    font-family: Roboto, sans-serif;
    font-size: 25px;
    font-weight: 600;
    line-height: 36px;
}

.security h2 {
    padding: 44px 20px 0;
    font-size: 21px;
    font-weight: 600;
    line-height: 30px;
}

.settings {
    margin-top: 11px;
    padding: 1px 0;
}

.setting {
    position: relative;
    display: flex;
    align-items: center;
    height: 80px;
    padding: 0 20px;
    color: #e9e9ea;
    font-size: 21px;
}

.setting > :first-child {
    flex: 1;
}

.setting .value {
    margin-right: 9px;
    color: #6b6c71;
    font-size: 18px;
}

.hidden-value {
    margin-right: 4px;
}

.with-gap {
    margin-right: 10px;
}

.marked-row::after {
    inset: 3px 5px 5px 8px;
}

.switch {
    appearance: none;
    position: relative;
    width: 56px;
    height: 28px;
    margin: 0 -2px 0 0;
    border-radius: 14px;
    background: #55565a;
    cursor: pointer;
}

.switch::after {
    content: "";
    position: absolute;
    top: 4px;
    left: 4px;
    width: 20px;
    height: 20px;
    border-radius: 50%;
    background: #fff;
}

.switch:checked {
    background: #ffa502;
}

.switch:checked::after {
    left: 32px;
}
```
